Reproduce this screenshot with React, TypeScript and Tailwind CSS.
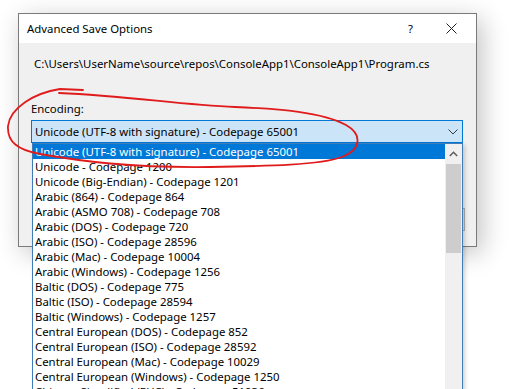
const encodings = [
  "Unicode (UTF-8 with signature) - Codepage 65001",
  "Unicode - Codepage 1200",
  "Unicode (Big-Endian) - Codepage 1201",
  "Arabic (864) - Codepage 864",
  "Arabic (ASMO 708) - Codepage 708",
  "Arabic (DOS) - Codepage 720",
  "Arabic (ISO) - Codepage 28596",
  "Arabic (Mac) - Codepage 10004",
  "Arabic (Windows) - Codepage 1256",
  "Baltic (DOS) - Codepage 775",
  "Baltic (ISO) - Codepage 28594",
  "Baltic (Windows) - Codepage 1257",
  "Central European (DOS) - Codepage 852",
  "Central European (ISO) - Codepage 28592",
  "Central European (Mac) - Codepage 10029",
  "Central European (Windows) - Codepage 1250",
  "Chinese Simplified (EUC) - Codepage 51936",
];

const font = "font-['Noto_Sans',sans-serif] text-[11.4px] text-black";

function App() {
  return (
    <div className={`relative w-[532px] h-[389px] overflow-hidden bg-white ${font}`}>
      {/* dialog */}
      <div className="ml-[18px] mt-[13px] w-[459px] h-[234px] flex flex-col border border-[#7a7a7a] bg-[#f0f0f0] shadow-[5px_6px_24px_rgba(0,0,0,0.24)]">
        <div className="h-[29px] shrink-0 bg-white flex items-center pl-[8px]">
          <span className="leading-none">Advanced Save Options</span>
          <span className="ml-auto mr-[33px] leading-none">?</span>
          <svg width="11" height="11" viewBox="0 0 11 11" className="mr-[19px]">
            <path d="M0.5 0.5 L10.5 10.5 M10.5 0.5 L0.5 10.5" stroke="#222" strokeWidth="1" />
          </svg>
        </div>
        <div className="flex-1 flex flex-col pt-[13px]">
          <div className="pl-[15px] leading-[16px]">C:\Users\UserName\source\repos\ConsoleApp1\ConsoleApp1\Program.cs</div>
          <div className="pl-[12px] mt-[29px] leading-[16px]">Encoding:</div>
          <div className="ml-[12px] mt-[3px] w-[432px] h-[23px] border border-[#0078d7] bg-[#cce4f7] flex items-center pl-[3px]">
            <span className="leading-none">Unicode (UTF-8 with signature) - Codepage 65001</span>
            <svg width="10" height="6" viewBox="0 0 10 6" className="ml-auto mr-[4px]">
              <path d="M0.5 0.5 L5 5 L9.5 0.5" fill="none" stroke="#3a3a3a" strokeWidth="1" />
            </svg>
          </div>
          <div className="mt-auto mb-[15px] ml-auto mr-[11px] w-[75px] h-[23px] border border-[#adadad] bg-[#e1e1e1]" />
        </div>
      </div>

      {/* dropdown list */}
      <div className="absolute left-[32px] top-[143px] w-[431px] h-[258px] overflow-hidden border border-[#3f7cb8] bg-white flex shadow-[2px_2px_4px_rgba(0,0,0,0.18)]">
        <div className="flex-1 flex flex-col">
          {encodings.map((e, i) => (
            <div
              key={e}
              className={`h-[15px] shrink-0 pl-[2px] leading-[15px] whitespace-nowrap ${i === 0 ? "bg-[#0078d7] text-white" : ""}`}
            >
              {e}
            </div>
          ))}
        </div>
        <div className="w-[17px] bg-[#f0f0f0] flex flex-col">
          <div className="h-[20px] flex items-center justify-center">
            <svg width="9" height="6" viewBox="0 0 9 6">
              <path d="M0.8 5 L4.5 1.3 L8.2 5" fill="none" stroke="#606060" strokeWidth="1.6" />
            </svg>
          </div>
          <div className="h-[89px] mx-[1px] bg-[#cdcdcd]" />
        </div>
      </div>

      {/* red freehand annotation */}
      <svg className="absolute inset-0 pointer-events-none" width="532" height="389" viewBox="0 0 532 389">
        <path
          d="M83 90 L60 89 C34 93 10 108 8 126 C7 142 18 150 40 154 C80 161 130 168 210 167 C270 166 320 165 342 157 C362 149 362 134 346 125 C322 112 280 109 235 107 C180 105 130 96 59 93"
          fill="none"
          stroke="#e01b1b"
          strokeWidth="1.8"
          strokeLinecap="round"
        />
      </svg>
    </div>
  );
}

export default App;
